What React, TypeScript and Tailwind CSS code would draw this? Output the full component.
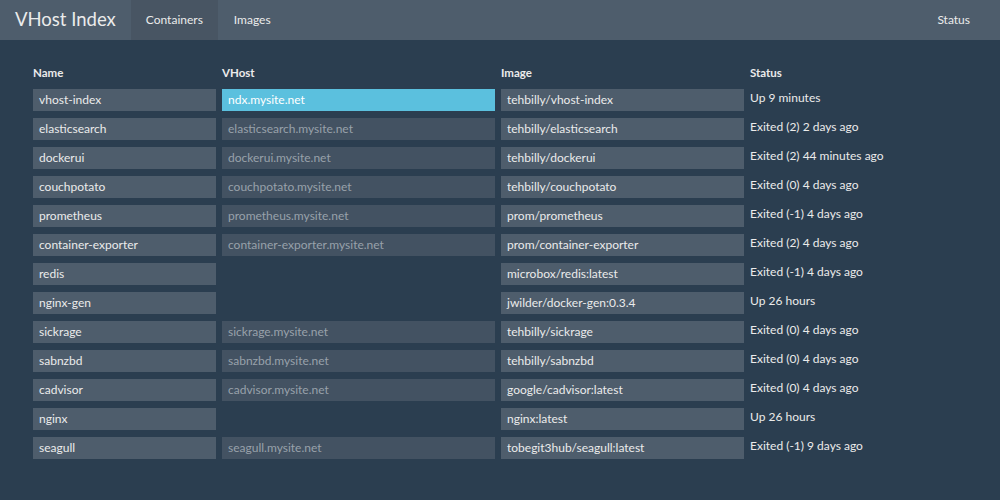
import React from "react";

const rows: [string, string, string, string][] = [
  ["vhost-index", "ndx.mysite.net", "tehbilly/vhost-index", "Up 9 minutes"],
  ["elasticsearch", "elasticsearch.mysite.net", "tehbilly/elasticsearch", "Exited (2) 2 days ago"],
  ["dockerui", "dockerui.mysite.net", "tehbilly/dockerui", "Exited (2) 44 minutes ago"],
  ["couchpotato", "couchpotato.mysite.net", "tehbilly/couchpotato", "Exited (0) 4 days ago"],
  ["prometheus", "prometheus.mysite.net", "prom/prometheus", "Exited (-1) 4 days ago"],
  ["container-exporter", "container-exporter.mysite.net", "prom/container-exporter", "Exited (2) 4 days ago"],
  ["redis", "", "microbox/redis:latest", "Exited (-1) 4 days ago"],
  ["nginx-gen", "", "jwilder/docker-gen:0.3.4", "Up 26 hours"],
  ["sickrage", "sickrage.mysite.net", "tehbilly/sickrage", "Exited (0) 4 days ago"],
  ["sabnzbd", "sabnzbd.mysite.net", "tehbilly/sabnzbd", "Exited (0) 4 days ago"],
  ["cadvisor", "cadvisor.mysite.net", "google/cadvisor:latest", "Exited (0) 4 days ago"],
  ["nginx", "", "nginx:latest", "Up 26 hours"],
  ["seagull", "seagull.mysite.net", "tobegit3hub/seagull:latest", "Exited (-1) 9 days ago"],
];

export default function App() {
  return (
    <div
      className="w-[1000px] h-[500px] bg-[#2b3e50] text-[#ebebeb] overflow-hidden"
      style={{ fontFamily: "Lato, 'Open Sans', sans-serif" }}
    >
      <nav className="h-[40px] bg-[#4e5d6c] flex items-stretch">
        <div className="pl-[15px] pr-[15px] flex items-center text-[18.5px] text-[#ebebeb]">VHost Index</div>
        <div className="w-[87px] bg-[#485563] flex items-center justify-center text-[12px]">Containers</div>
        <div className="px-[16px] flex items-center text-[12px]">Images</div>
        <div className="flex-1" />
        <div className="pr-[30px] flex items-center text-[12px]">Status</div>
      </nav>
      <div className="pl-[33px] pt-[26px]">
        <div className="grid grid-cols-[183px_273px_243px_240px] gap-x-[6px] gap-y-[7px] text-[12px]">
          <div className="font-bold text-[11.5px] h-[16px] leading-[14px]">Name</div>
          <div className="font-bold text-[11.5px] h-[16px] leading-[14px]">VHost</div>
          <div className="font-bold text-[11.5px] h-[16px] leading-[14px]">Image</div>
          <div className="font-bold text-[11.5px] h-[16px] leading-[14px]">Status</div>
          {rows.map(([name, vhost, image, status], i) => (
            <React.Fragment key={name}>
              <div className="h-[22px] bg-[#4e5d6c] pl-[6px] flex items-center text-[#ebebeb] whitespace-nowrap">{name}</div>
              {vhost ? (
                <div
                  className={
                    i === 0
                      ? "h-[22px] bg-[#5bc0de] pl-[6px] flex items-center text-white whitespace-nowrap"
                      : "h-[22px] bg-[#435262] pl-[6px] flex items-center text-[#98a1aa] whitespace-nowrap"
                  }
                >
                  {vhost}
                </div>
              ) : (
                <div className="h-[22px]" />
              )}
              <div className="h-[22px] bg-[#4e5d6c] pl-[6px] flex items-center text-[#ebebeb] whitespace-nowrap">{image}</div>
              <div className="h-[22px] pb-[4px] flex items-center text-[#ebebeb] whitespace-nowrap">{status}</div>
            </React.Fragment>
          ))}
        </div>
      </div>
    </div>
  );
}
